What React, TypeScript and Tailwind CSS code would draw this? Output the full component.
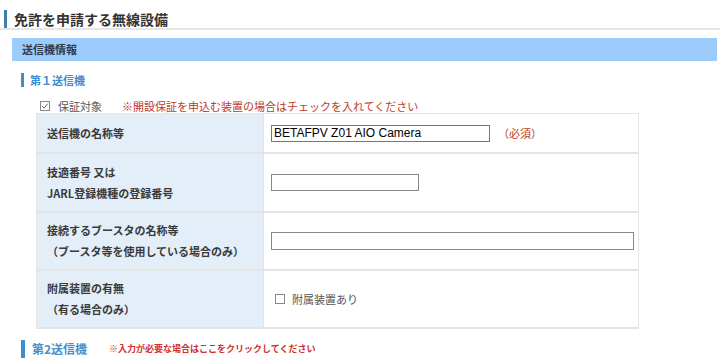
import React from "react";

const jp = { fontFamily: '"Noto Sans CJK JP", "Noto Sans", sans-serif' };

function CheckIcon({ checked }: { checked: boolean }) {
  return (
    <svg width="10" height="10" viewBox="0 0 10 10" className="shrink-0">
      <rect x="0.5" y="0.5" width="9" height="9" fill="#fff" stroke="#888" strokeWidth="1" />
      {checked && <path d="M2.2 5.2 L4.2 7.2 L7.8 2.6" fill="none" stroke="#666" strokeWidth="1" />}
    </svg>
  );
}

function Row({ h, label, children, first }: { h: string; label: React.ReactNode; children?: React.ReactNode; first?: boolean }) {
  return (
    <div className={`flex ${h} ${first ? "" : "border-t-2 border-[#e4e4e4]"}`}>
      <div className="w-[226px] shrink-0 bg-[#e3eef9] flex flex-col justify-center pl-[10px] text-[11px] font-bold text-[#3a3a3a] leading-[21px]">
        {label}
      </div>
      <div className="flex-1 flex items-center pl-[7px] border-l border-[#e4e4e4]">{children}</div>
    </div>
  );
}

export default function App() {
  return (
    <div className="w-[720px] h-[362px] bg-white overflow-hidden relative" style={jp}>
      <div className="pt-[10px] border-b-2 border-[#e6e6e6]">
        <div className="flex items-center h-[18px] pb-[1px]">
          <div className="ml-[4px] w-[3px] h-[18px] bg-[#3d7fa6]" />
          <div className="ml-[7px] text-[14px] font-bold text-[#333] leading-[18px]">免許を申請する無線設備</div>
        </div>
      </div>
      <div className="mt-[8px] ml-[12px] mr-[3px] h-[23px] bg-[#9cccfb] flex items-center pl-[10px]">
        <span className="text-[11px] font-bold text-[#2f3a4a]">送信機情報</span>
      </div>
      <div className="mt-[12px] ml-[21px] flex items-center h-[14px]">
        <div className="w-[3px] h-[14px] bg-[#3b8fd0]" />
        <span className="ml-[6px] text-[11px] font-bold text-[#3c8ccf] leading-[14px]">第１送信機</span>
      </div>
      <div className="mt-[12px] ml-[40px] flex items-center h-[14px] text-[11px] leading-[14px]">
        <CheckIcon checked />
        <span className="ml-[8px] text-[#555]">保証対象</span>
        <span className="ml-[20px] text-[#c0392b]">※開設保証を申込む装置の場合はチェックを入れてください</span>
      </div>
      <div className="ml-[36px] w-[603px] border border-[#e4e4e4] border-b-2">
        <Row h="h-[38px]" first label={<span>送信機の名称等</span>}>
          <div className="w-[219px] h-[17px] border border-[#777] flex items-center pl-[2px] text-[12px] text-black" style={{ fontFamily: '"Liberation Sans", Arial, sans-serif' }}>
            BETAFPV Z01 AIO Camera
          </div>
          <span className="ml-[8px] text-[11px] text-[#c0392b]">（必須）</span>
        </Row>
        <Row h="h-[59px]" label={<><span>技適番号 又は</span><span>JARL登録機種の登録番号</span></>}>
          <div className="w-[148px] h-[17px] border border-[#888]" />
        </Row>
        <Row h="h-[58px]" label={<><span>接続するブースタの名称等</span><span>（ブースタ等を使用している場合のみ）</span></>}>
          <div className="w-[363px] h-[18px] border border-[#888]" />
        </Row>
        <Row h="h-[58px]" label={<><span>附属装置の有無</span><span>（有る場合のみ）</span></>}>
          <div className="flex items-center pl-[4px] text-[11px] text-[#555]">
            <CheckIcon checked={false} />
            <span className="ml-[7px]">附属装置あり</span>
          </div>
        </Row>
      </div>
      <div className="mt-[11px] ml-[21px] flex items-center h-[18px]">
        <div className="w-[4px] h-[18px] bg-[#3b8fd0]" />
        <span className="ml-[7px] text-[12px] font-bold text-[#4a90c8] leading-[18px]">第2送信機</span>
        <span className="ml-[22px] text-[9px] font-bold text-[#d0312d] leading-[18px]">※入力が必要な場合はここをクリックしてください</span>
      </div>
    </div>
  );
}
